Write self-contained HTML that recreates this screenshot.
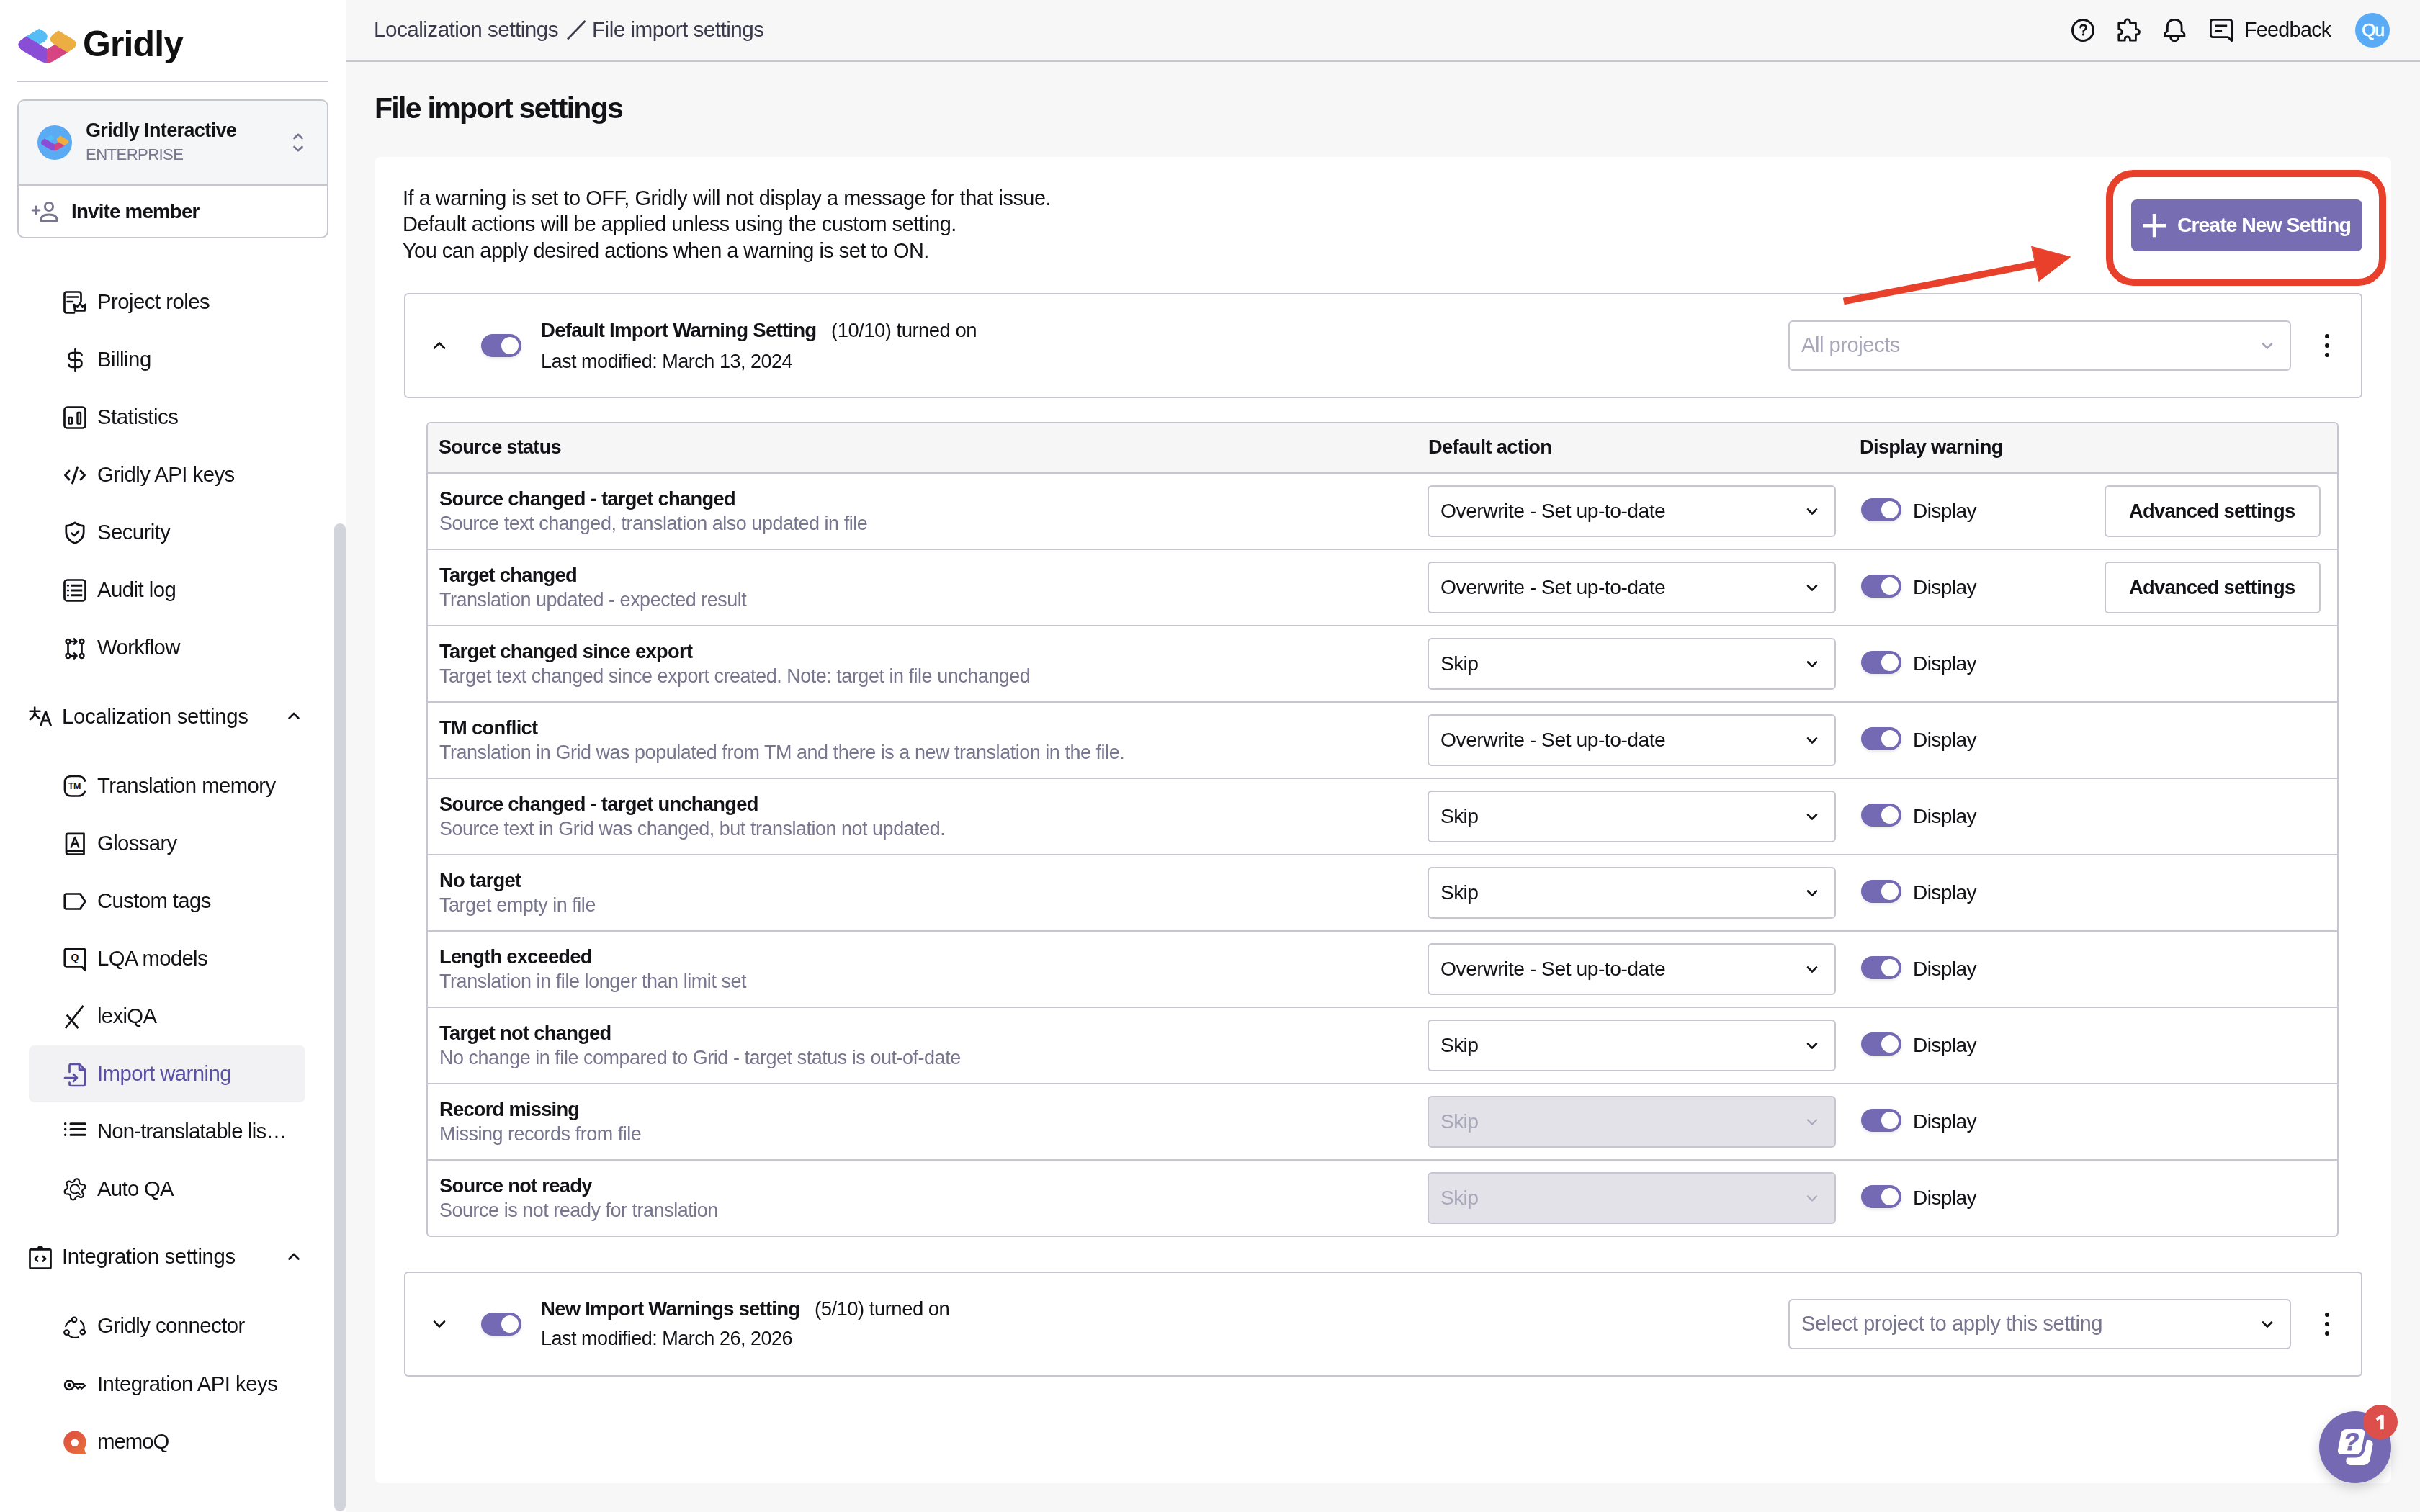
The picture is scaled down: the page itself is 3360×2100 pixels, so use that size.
<!DOCTYPE html>
<html><head><meta charset="utf-8"><title>File import settings</title>
<style>
html,body{margin:0;padding:0;}
body{width:3360px;height:2100px;position:relative;overflow:hidden;background:#f7f7f7;font-family:"Liberation Sans", sans-serif;}
.t{position:absolute;white-space:nowrap;font-family:"Liberation Sans", sans-serif;will-change:transform;}
.b{position:absolute;}
svg.b{overflow:visible;}
@media (max-width:1700px){html{zoom:0.5;}}
</style></head><body>
<div class="b" style="left:0px;top:0px;width:480px;height:2100px;background:#fff"></div>
<svg class="b" style="left:20px;top:30px;color:#000" width="100" height="70" viewBox="20 30 100 70" fill="none" stroke="currentColor" stroke-linecap="round" stroke-linejoin="round">
<path fill="#56bcf6" stroke="#56bcf6" stroke-width="1" d="M36.7 50.8 L54.5 40.2 L61 44 Q67 48 64.5 54 Q63 57 59 59 L54 61.2 Z"/>
<path fill="#8a4dd6" stroke="#8a4dd6" stroke-width="1" d="M36.4 51 L65.6 68.4 L65.6 87 Q61 87 55 84 L30 69 Q25.5 66 25.8 61.5 Q26 58 30 55.5 Z"/>
<path fill="#d64482" stroke="#d64482" stroke-width="1" d="M65.6 68.4 L77.4 61.7 L93.8 72.4 L74 84.5 Q70 87 65.6 87 Z"/>
<path fill="#ecae42" stroke="#ecae42" stroke-width="1" d="M81.3 43 L102 55.5 Q105.5 58 105.2 61.5 Q105 65 101 67.5 L93.8 72.4 L73.5 60 Q70 57.5 70.2 54 Q70.5 50.5 74 48 Z"/>
</svg>
<div class="t" style="left:114.8px;top:35.6px;font-size:50px;line-height:50px;font-weight:700;color:#111;letter-spacing:-0.9px;">Gridly</div>
<div class="b" style="left:24px;top:111.5px;width:432px;height:2.0px;background:#c6c6d1"></div>
<div class="b" style="left:24px;top:138px;width:432px;height:193px;border:2px solid #c6c6d1;border-radius:10px;background:#fff;box-sizing:border-box;overflow:hidden"></div>
<div class="b" style="left:26px;top:140px;width:428px;height:116px;background:#f5f6f8;border-radius:8px 8px 0 0"></div>
<div class="b" style="left:26px;top:256px;width:428px;height:2px;background:#c6c6d1"></div>
<div class="b" style="left:52px;top:174px;width:48px;height:48px;border-radius:50%;background:#5aaaf4"></div>
<svg class="b" style="left:52px;top:174px;" width="48" height="48" viewBox="52 174 48 48" fill="none" stroke="currentColor" stroke-linecap="round" stroke-linejoin="round">
<path fill="#56bcf6" stroke="none" d="M62.5 192.5 L70.5 187.8 L74 189.8 Q76 191.5 74.5 193.5 L70 196.2 Z"/>
<path fill="#8a4dd6" stroke="none" d="M62 192.5 L76 200.5 L76 209.3 Q73 209.5 70.5 208 L58.5 201 Q56.5 199.5 57 197.5 Q57.5 196 59 195 Z"/>
<path fill="#d64482" stroke="none" d="M76 200.5 L81.5 197.3 L89.5 202.3 L80 208 Q78 209.3 76 209.3 Z"/>
<path fill="#ecae42" stroke="none" d="M83.5 188.3 L94 194.5 Q95.5 195.8 95.2 197.3 Q95 198.8 93 199.8 L89.5 202.3 L80 196.5 Q78.5 195.3 78.5 193.7 Q78.7 192.2 80.3 191.2 Z"/>
</svg>
<div class="t" style="left:119px;top:168.1px;font-size:26.98px;line-height:26.98px;font-weight:700;color:#121217;letter-spacing:-0.618px;">Gridly Interactive</div>
<div class="t" style="left:119px;top:204.3px;font-size:22.15px;line-height:22.15px;font-weight:400;color:#78768e;letter-spacing:-0.605px;">ENTERPRISE</div>
<svg class="b" style="left:402px;top:183px;color:#78768e" width="24" height="30" viewBox="0 0 24 30" fill="none" stroke="currentColor" stroke-linecap="round" stroke-linejoin="round"><path stroke-width="2.6" d="M6.5 9 L12 3.8 L17.5 9 M6.5 21 L12 26.2 L17.5 21"/></svg>
<svg class="b" style="left:42px;top:278px;color:#78768e" width="40" height="32" viewBox="0 0 40 32" fill="none" stroke="currentColor" stroke-linecap="round" stroke-linejoin="round"><path stroke-width="2.8" d="M3 14 H13 M8 9 V19"/><circle stroke-width="2.8" cx="26" cy="9" r="5.6"/><path stroke-width="2.8" d="M15 29 V27.5 Q15 20 26 20 Q37 20 37 27.5 V29 Z"/></svg>
<div class="t" style="left:99px;top:279.5px;font-size:27.62px;line-height:27.62px;font-weight:700;color:#121217;letter-spacing:-0.743px;">Invite member</div>
<svg class="b" style="left:88px;top:403.8px;color:#121217" width="32" height="32" viewBox="0 0 32 32" fill="none" stroke="currentColor" stroke-linecap="round" stroke-linejoin="round"><path stroke-width="2.7" d="M15 30.5 H4.5 Q1.5 30.5 1.5 27.5 V4.5 Q1.5 1.5 4.5 1.5 H21.5 Q24.5 1.5 24.5 4.5 V14.5"/><path stroke-width="2.7" d="M5.5 8.5 H20.5 M5.5 15 H13"/><path stroke-width="2.7" d="M16 27.5 L15 19 L19.5 22.5 L23 17.2 L26.5 22.5 L30.5 19 L29.5 27.5 Z"/></svg>
<div class="t" style="left:134.7px;top:403.9px;font-size:29.33px;line-height:29.33px;font-weight:400;color:#121217;letter-spacing:-0.522px;">Project roles</div>
<svg class="b" style="left:88px;top:483.9px;color:#121217" width="32" height="32" viewBox="0 0 32 32" fill="none" stroke="currentColor" stroke-linecap="round" stroke-linejoin="round"><path stroke-width="2.7" d="M16.5 1 V31 M25.5 9.5 Q25.5 6 20.5 6 H12.5 Q7.5 6 7.5 10.8 Q7.5 15.8 12.5 15.8 H20.5 Q25.5 15.8 25.5 20.8 Q25.5 25.8 20.5 25.8 H12.5 Q7.5 25.8 7.5 22"/></svg>
<div class="t" style="left:134.7px;top:484.0px;font-size:29.33px;line-height:29.33px;font-weight:400;color:#121217;letter-spacing:-0.502px;">Billing</div>
<svg class="b" style="left:88px;top:563.8px;color:#121217" width="32" height="32" viewBox="0 0 32 32" fill="none" stroke="currentColor" stroke-linecap="round" stroke-linejoin="round"><rect stroke-width="2.7" x="1.5" y="1.5" width="29" height="29" rx="4"/><rect stroke-width="2.4" x="7.5" y="16" width="4.5" height="8.5" rx="0.5"/><rect stroke-width="2.4" x="19.5" y="9" width="4.5" height="15.5" rx="0.5"/></svg>
<div class="t" style="left:134.7px;top:563.9px;font-size:29.33px;line-height:29.33px;font-weight:400;color:#121217;letter-spacing:-0.501px;">Statistics</div>
<svg class="b" style="left:88px;top:643.8px;color:#121217" width="32" height="32" viewBox="0 0 32 32" fill="none" stroke="currentColor" stroke-linecap="round" stroke-linejoin="round"><path stroke-width="3" d="M8 10 L2.5 16 L8 22 M24 10 L29.5 16 L24 22 M19.5 5 L12.5 27"/></svg>
<div class="t" style="left:134.7px;top:643.9px;font-size:29.33px;line-height:29.33px;font-weight:400;color:#121217;letter-spacing:-0.546px;">Gridly API keys</div>
<svg class="b" style="left:88px;top:723.8px;color:#121217" width="32" height="32" viewBox="0 0 32 32" fill="none" stroke="currentColor" stroke-linecap="round" stroke-linejoin="round"><path stroke-width="2.7" d="M16 1.8 Q10.5 5.8 3.8 6.3 V15 Q3.8 25.5 16 30.5 Q28.2 25.5 28.2 15 V6.3 Q21.5 5.8 16 1.8 Z"/><path stroke-width="2.7" d="M11.6 16.8 L15.2 20 L21.2 13.8"/></svg>
<div class="t" style="left:134.7px;top:723.9px;font-size:29.33px;line-height:29.33px;font-weight:400;color:#121217;letter-spacing:-0.582px;">Security</div>
<svg class="b" style="left:88px;top:803.8px;color:#121217" width="32" height="32" viewBox="0 0 32 32" fill="none" stroke="currentColor" stroke-linecap="round" stroke-linejoin="round"><rect stroke-width="2.7" x="1.5" y="1.5" width="29" height="29" rx="4"/><path stroke-width="3.1" stroke-linecap="butt" d="M10.2 9.2 H26.2 M10.2 16 H26.2 M10.2 22.8 H26.2"/><path stroke-width="3.2" d="M6.4 9.2 h0.1 M6.4 16 h0.1 M6.4 22.8 h0.1"/></svg>
<div class="t" style="left:134.7px;top:803.9px;font-size:29.33px;line-height:29.33px;font-weight:400;color:#121217;letter-spacing:-0.549px;">Audit log</div>
<svg class="b" style="left:88px;top:883.8px;color:#121217" width="32" height="32" viewBox="0 0 32 32" fill="none" stroke="currentColor" stroke-linecap="round" stroke-linejoin="round"><circle stroke-width="2.4" cx="6.5" cy="7" r="3"/><circle stroke-width="2.4" cx="25.5" cy="7" r="3"/><circle stroke-width="2.4" cx="6.5" cy="27" r="3"/><circle stroke-width="2.4" cx="25.5" cy="27" r="3"/><path stroke-width="2.6" d="M6.5 10 V24 M25.5 10 V24 M9.5 7 H18.5 M15 3.5 L18.5 7 L15 10.5 M9.5 27 H18.5 M15 23.5 L18.5 27 L15 30.5"/></svg>
<div class="t" style="left:134.7px;top:883.9px;font-size:29.33px;line-height:29.33px;font-weight:400;color:#121217;letter-spacing:-0.66px;">Workflow</div>
<svg class="b" style="left:40px;top:979.8px;color:#121217" width="32" height="32" viewBox="0 0 32 32" fill="none" stroke="currentColor" stroke-linecap="round" stroke-linejoin="round"><path stroke-width="2.6" d="M1.5 7.8 H15.5 M8.2 2.5 V8.5 Q8 15.5 1.8 19.2 M8.8 10.5 Q10.5 15.5 15 17.8"/><path stroke-width="2.8" d="M16.5 27.5 L23.5 8.5 L30.5 27.5 M19 21 H28"/></svg>
<div class="t" style="left:86px;top:979.9px;font-size:29.33px;line-height:29.33px;font-weight:400;color:#121217;letter-spacing:-0.258px;">Localization settings</div>
<svg class="b" style="left:396px;top:982px;color:#121217" width="24" height="24" viewBox="0 0 24 24" fill="none" stroke="currentColor" stroke-linecap="round" stroke-linejoin="round"><path stroke-width="2.6" d="M5.5 15.5 L12 9 L18.5 15.5"/></svg>
<div class="b" style="left:40px;top:1452px;width:384px;height:79px;background:#f2f2f5;border-radius:8px"></div>
<svg class="b" style="left:88px;top:1076.2px;color:#121217" width="32" height="32" viewBox="0 0 32 32" fill="none" stroke="currentColor" stroke-linecap="round" stroke-linejoin="round"><path stroke-width="2.7" d="M30 8.5 Q27.5 2 20.5 2 H11 Q2 2 2 11 V20.5 Q2 29.5 11 29.5 H20.5 Q27.5 29.5 30 23"/><text x="15.5" y="20.2" fill="currentColor" stroke="none" font-family="Liberation Sans" font-weight="700" font-size="12.5" stroke="currentColor" stroke-width="0.5" text-anchor="middle" letter-spacing="-0.3">TM</text></svg>
<div class="t" style="left:134.7px;top:1076.3px;font-size:29.33px;line-height:29.33px;font-weight:400;color:#121217;letter-spacing:-0.584px;">Translation memory</div>
<svg class="b" style="left:88px;top:1155.8px;color:#121217" width="32" height="32" viewBox="0 0 32 32" fill="none" stroke="currentColor" stroke-linecap="round" stroke-linejoin="round"><path stroke-width="2.7" d="M28.5 26.5 V1.8 H6.5 Q4 1.8 4 4.3 V28 Q4 30.5 6.5 30.5 H28.5 V26 H5"/><path stroke-width="2.5" d="M10.8 20.5 L16 7 L21.2 20.5 M12.6 16 H19.4"/></svg>
<div class="t" style="left:134.7px;top:1155.9px;font-size:29.33px;line-height:29.33px;font-weight:400;color:#121217;letter-spacing:-0.636px;">Glossary</div>
<svg class="b" style="left:88px;top:1235.8px;color:#121217" width="32" height="32" viewBox="0 0 32 32" fill="none" stroke="currentColor" stroke-linecap="round" stroke-linejoin="round"><path stroke-width="2.7" d="M1.8 8 Q1.8 5.5 4.3 5.5 H23.2 L30.3 16 L23.2 26.5 H4.3 Q1.8 26.5 1.8 24 Z"/></svg>
<div class="t" style="left:134.7px;top:1235.9px;font-size:29.33px;line-height:29.33px;font-weight:400;color:#121217;letter-spacing:-0.633px;">Custom tags</div>
<svg class="b" style="left:88px;top:1315.8px;color:#121217" width="32" height="32" viewBox="0 0 32 32" fill="none" stroke="currentColor" stroke-linecap="round" stroke-linejoin="round"><path stroke-width="2.7" d="M30.3 31.8 V4.3 Q30.3 1.8 27.8 1.8 H4.3 Q1.8 1.8 1.8 4.3 V23.8 Q1.8 26.3 4.3 26.3 H25 Z"/><text x="16" y="18.5" fill="currentColor" stroke="none" font-family="Liberation Sans" font-weight="700" font-size="14" stroke="currentColor" stroke-width="0.6" text-anchor="middle">Q</text></svg>
<div class="t" style="left:134.7px;top:1315.9px;font-size:29.33px;line-height:29.33px;font-weight:400;color:#121217;letter-spacing:-0.683px;">LQA models</div>
<svg class="b" style="left:88px;top:1395.8px;color:#121217" width="32" height="32" viewBox="0 0 32 32" fill="none" stroke="currentColor" stroke-linecap="round" stroke-linejoin="round"><path stroke-width="2.8" stroke-linecap="butt" d="M27.5 0.8 L3 32 M4.8 13.5 L20.5 32"/></svg>
<div class="t" style="left:134.7px;top:1395.9px;font-size:29.33px;line-height:29.33px;font-weight:400;color:#121217;letter-spacing:-0.664px;">lexiQA</div>
<svg class="b" style="left:88px;top:1475.8px;color:#5a4fa5" width="32" height="32" viewBox="0 0 32 32" fill="none" stroke="currentColor" stroke-linecap="round" stroke-linejoin="round"><path stroke-width="2.7" d="M8.5 13 V4 Q8.5 1.8 10.7 1.8 H22 L29.8 9.6 V29.8 Q29.8 32 27.6 32 H10.7 Q8.5 32 8.5 29.8 V27.5 M22 1.8 V9.6 H29.8"/><path stroke-width="2.7" d="M2 21 H19 M14 16 L19 21 L14 26"/></svg>
<div class="t" style="left:134.7px;top:1475.9px;font-size:29.33px;line-height:29.33px;font-weight:400;color:#5a4fa5;letter-spacing:-0.574px;">Import warning</div>
<svg class="b" style="left:88px;top:1555.8px;color:#121217" width="32" height="32" viewBox="0 0 32 32" fill="none" stroke="currentColor" stroke-linecap="round" stroke-linejoin="round"><path stroke-width="3" d="M10 4.8 H30.5 M10 12.5 H30.5 M10 20.3 H30.5"/><path stroke-width="3.4" d="M2.6 4.8 h0.1 M2.6 12.5 h0.1 M2.6 20.3 h0.1"/></svg>
<div class="t" style="left:134.7px;top:1555.9px;font-size:29.33px;line-height:29.33px;font-weight:400;color:#121217;letter-spacing:-0.839px;">Non-translatable lis&hellip;</div>
<svg class="b" style="left:88px;top:1635.8px;color:#121217" width="32" height="32" viewBox="0 0 32 32" fill="none" stroke="currentColor" stroke-linecap="round" stroke-linejoin="round"><path stroke-width="2.2" d="M27.74 15.80 L27.13 16.38 L26.70 16.92 L26.39 17.45 L26.18 17.96 L26.07 18.50 L26.06 19.07 L26.15 19.70 L26.34 20.40 L26.72 21.26 L27.65 22.53 L27.78 23.45 L27.68 24.29 L27.41 25.04 L26.99 25.70 L26.44 26.24 L25.78 26.66 L25.02 26.94 L24.16 27.03 L23.17 26.84 L21.87 25.97 L21.06 25.73 L20.38 25.63 L19.77 25.62 L19.22 25.70 L18.70 25.87 L18.20 26.15 L17.70 26.54 L17.18 27.06 L16.63 27.82 L16.00 29.26 L15.26 29.83 L14.49 30.16 L13.70 30.30 L12.92 30.27 L12.18 30.07 L11.48 29.70 L10.87 29.18 L10.35 28.48 L10.02 27.53 L10.13 25.97 L9.93 25.15 L9.68 24.50 L9.38 23.97 L9.04 23.53 L8.63 23.17 L8.14 22.88 L7.55 22.64 L6.84 22.45 L5.91 22.35 L4.35 22.53 L3.48 22.18 L2.81 21.67 L2.29 21.06 L1.93 20.37 L1.73 19.62 L1.70 18.84 L1.85 18.04 L2.19 17.25 L2.85 16.49 L4.26 15.80 L4.87 15.22 L5.30 14.68 L5.61 14.15 L5.82 13.64 L5.93 13.10 L5.94 12.53 L5.85 11.90 L5.66 11.20 L5.28 10.34 L4.35 9.07 L4.22 8.15 L4.32 7.31 L4.59 6.56 L5.01 5.90 L5.56 5.36 L6.22 4.94 L6.98 4.66 L7.84 4.57 L8.83 4.76 L10.13 5.63 L10.94 5.87 L11.62 5.97 L12.23 5.98 L12.78 5.90 L13.30 5.73 L13.80 5.45 L14.30 5.06 L14.82 4.54 L15.37 3.78 L16.00 2.34 L16.74 1.77 L17.51 1.44 L18.30 1.30 L19.08 1.33 L19.82 1.53 L20.52 1.90 L21.13 2.42 L21.65 3.12 L21.98 4.07 L21.87 5.63 L22.07 6.45 L22.32 7.10 L22.62 7.63 L22.96 8.07 L23.37 8.43 L23.86 8.72 L24.45 8.96 L25.16 9.15 L26.09 9.25 L27.65 9.07 L28.52 9.42 L29.19 9.93 L29.71 10.54 L30.07 11.23 L30.27 11.98 L30.30 12.76 L30.15 13.56 L29.81 14.35 L29.15 15.11 L27.74 15.80 Z"/><path stroke-width="2.1" d="M22.1 15.4 A6.2 6.2 0 1 0 19.9 20.1"/><path stroke-width="2.1" d="M19.9 19.8 L22.9 23.1"/></svg>
<div class="t" style="left:134.7px;top:1635.9px;font-size:29.33px;line-height:29.33px;font-weight:400;color:#121217;letter-spacing:-0.711px;">Auto QA</div>
<svg class="b" style="left:40px;top:1730.3px;color:#121217" width="32" height="32" viewBox="0 0 32 32" fill="none" stroke="currentColor" stroke-linecap="round" stroke-linejoin="round"><rect stroke-width="2.7" x="1.5" y="5.3" width="29" height="26.2" rx="1.5"/><path stroke-width="2.6" d="M13 5 Q13 1.6 16 1.6 Q19 1.6 19 5 M12.2 15 L8.8 18.3 L12.2 21.6 M19.8 15 L23.2 18.3 L19.8 21.6"/></svg>
<div class="t" style="left:86px;top:1730.4px;font-size:29.33px;line-height:29.33px;font-weight:400;color:#121217;letter-spacing:-0.352px;">Integration settings</div>
<svg class="b" style="left:396px;top:1732.5px;color:#121217" width="24" height="24" viewBox="0 0 24 24" fill="none" stroke="currentColor" stroke-linecap="round" stroke-linejoin="round"><path stroke-width="2.6" d="M5.5 15.5 L12 9 L18.5 15.5"/></svg>
<svg class="b" style="left:88px;top:1826.1px;color:#121217" width="32" height="32" viewBox="0 0 32 32" fill="none" stroke="currentColor" stroke-linecap="round" stroke-linejoin="round"><circle stroke-width="2.2" cx="15.05" cy="6.9" r="3.3"/><circle stroke-width="2.2" cx="4.5" cy="24.6" r="3.3"/><circle stroke-width="2.2" cx="26.8" cy="24.1" r="3.3"/><path stroke-width="2.2" d="M11.9 7.6 A13.3 13.3 0 0 0 3.1 16.2 M24.0 8.9 A13.3 13.3 0 0 1 28.5 20.9 M7.0 27.9 A13.3 13.3 0 0 0 20.6 31.2"/></svg>
<div class="t" style="left:134.7px;top:1826.2px;font-size:29.33px;line-height:29.33px;font-weight:400;color:#121217;letter-spacing:-0.547px;">Gridly connector</div>
<svg class="b" style="left:88px;top:1907.1px;color:#121217" width="32" height="32" viewBox="0 0 32 32" fill="none" stroke="currentColor" stroke-linecap="round" stroke-linejoin="round"><circle stroke-width="2.5" cx="8.2" cy="16.7" r="6.2"/><circle cx="8.2" cy="16.7" r="2.6" fill="currentColor" stroke="none"/><path stroke-width="2.4" stroke-linejoin="miter" d="M14.4 15.2 H27.2 L30 17.3 L25.5 21.5 L22.8 19.2 L20.1 21.4 L17.3 18.6 H14.4"/></svg>
<div class="t" style="left:134.7px;top:1907.2px;font-size:29.33px;line-height:29.33px;font-weight:400;color:#121217;letter-spacing:-0.528px;">Integration API keys</div>
<svg class="b" style="left:88px;top:1987.3px;" width="32" height="32" viewBox="0 0 32 32" fill="none" stroke="currentColor" stroke-linecap="round" stroke-linejoin="round"><defs><linearGradient id="mq" x1="0" y1="0" x2="1" y2="1"><stop offset="0" stop-color="#e0503f"/><stop offset="0.5" stop-color="#e25c3e"/><stop offset="1" stop-color="#e8733a"/></linearGradient></defs><path fill="url(#mq)" stroke="none" d="M16 0.5 A15.8 15.8 0 0 1 29 25.2 L31.2 32 H16 A15.75 15.75 0 0 1 16 0.5 Z"/><circle cx="15.8" cy="16.7" r="5.2" fill="#fff" stroke="none"/></svg>
<div class="t" style="left:134.7px;top:1987.4px;font-size:29.33px;line-height:29.33px;font-weight:400;color:#121217;letter-spacing:-1.003px;">memoQ</div>
<div class="b" style="left:464px;top:727px;width:16px;height:1372px;background:#d2d4dc;border-radius:8px"></div>
<div class="b" style="left:480px;top:84px;width:2880px;height:2px;background:#c6c6d1"></div>
<div class="t" style="left:519.3px;top:25.9px;font-size:29.64px;line-height:29.64px;font-weight:400;color:#3b3a4c;letter-spacing:-0.513px;">Localization settings</div>
<svg class="b" style="left:784px;top:26px;color:#3b3a4c" width="32" height="32" viewBox="0 0 32 32" fill="none" stroke="currentColor" stroke-linecap="round" stroke-linejoin="round"><path stroke-width="2.6" stroke-linecap="butt" d="M4 28.5 L28.5 3"/></svg>
<div class="t" style="left:822px;top:25.9px;font-size:29.64px;line-height:29.64px;font-weight:400;color:#3b3a4c;letter-spacing:-0.503px;">File import settings</div>
<svg class="b" style="left:2874px;top:24px;color:#121217" width="36" height="36" viewBox="0 0 36 36" fill="none" stroke="currentColor" stroke-linecap="round" stroke-linejoin="round"><circle stroke-width="3" cx="18" cy="18" r="14.5"/><path stroke-width="2.6" d="M14.6 14.2 Q14.6 10.9 18.5 10.9 Q22.4 10.9 22.4 14.1 Q22.4 16.4 20.1 17.6 Q18.5 18.5 18.5 20.4"/><circle cx="18.5" cy="23.9" r="1.7" fill="currentColor" stroke="none"/></svg>
<svg class="b" style="left:2938px;top:24px;color:#121217" width="36" height="36" viewBox="0 0 36 36" fill="none" stroke="currentColor" stroke-linecap="round" stroke-linejoin="round"><path stroke-width="2.8" d="M3.8 7.8 H12.2 V6.5 A3.6 3.6 0 0 1 19.4 6.5 V7.8 H27.4 V16.6 H28.8 A3.7 3.7 0 0 1 28.8 24 H27.4 V32.2 H19.4 V30.6 A3.6 3.6 0 0 0 12.2 30.6 V32.2 H3.8 V24 H4.5 A3.7 3.7 0 0 0 4.5 16.6 H3.8 Z"/></svg>
<svg class="b" style="left:3002px;top:24px;color:#121217" width="36" height="36" viewBox="0 0 36 36" fill="none" stroke="currentColor" stroke-linecap="round" stroke-linejoin="round"><path stroke-width="2.8" d="M3.5 26.3 V23.8 Q3.5 21.2 7.3 19.8 V13.8 Q7.3 3.4 17.2 3.4 Q27.1 3.4 27.1 13.8 V19.8 Q30.9 21.2 30.9 23.8 V26.3 Z"/><path stroke-width="2.8" d="M11.5 27.2 A5.7 5.7 0 0 0 22.9 27.2"/></svg>
<svg class="b" style="left:3066px;top:24px;color:#121217" width="36" height="36" viewBox="0 0 36 36" fill="none" stroke="currentColor" stroke-linecap="round" stroke-linejoin="round"><path stroke-width="2.8" stroke-linejoin="round" d="M6.5 3.4 H29.5 Q32.6 3.4 32.6 6.5 V32.8 L27.6 27.7 H6.5 Q3.4 27.7 3.4 24.6 V6.5 Q3.4 3.4 6.5 3.4 Z"/><path stroke-width="3.3" stroke-linecap="butt" d="M9.1 12.2 H26.2 M9.1 18.7 H19.1"/></svg>
<div class="t" style="left:3115.8px;top:27.0px;font-size:28.7px;line-height:28.7px;font-weight:400;color:#121217;letter-spacing:-0.693px;">Feedback</div>
<div class="b" style="left:3270px;top:18px;width:48px;height:48px;border-radius:50%;background:#5aabf5;color:#fff;font-size:24.5px;line-height:48px;text-align:center;font-weight:400;letter-spacing:-1.2px;padding-left:1px;box-sizing:border-box;-webkit-text-stroke:0.7px #fff">Qu</div>
<div class="t" style="left:519.8px;top:130.4px;font-size:41px;line-height:41px;font-weight:700;color:#121217;letter-spacing:-1.7px;">File import settings</div>
<div class="b" style="left:520px;top:218px;width:2800px;height:1842px;background:#fff;border-radius:8px"></div>
<div class="t" style="left:558.6px;top:260.9px;font-size:28.91px;line-height:28.91px;font-weight:400;color:#121217;letter-spacing:-0.474px;">If a warning is set to OFF, Gridly will not display a message for that issue.</div>
<div class="t" style="left:558.6px;top:296.9px;font-size:28.91px;line-height:28.91px;font-weight:400;color:#121217;letter-spacing:-0.489px;">Default actions will be applied unless using the custom setting.</div>
<div class="t" style="left:558.6px;top:333.9px;font-size:28.91px;line-height:28.91px;font-weight:400;color:#121217;letter-spacing:-0.513px;">You can apply desired actions when a warning is set to ON.</div>
<div class="b" style="left:2959px;top:277px;width:321px;height:72px;border-radius:8px;background:#776db2"></div>
<svg class="b" style="left:2975px;top:296.7px;color:#fff" width="32" height="33" viewBox="0 0 32 33" fill="none" stroke="currentColor" stroke-linecap="round" stroke-linejoin="round"><path stroke-width="4.4" stroke-linecap="butt" d="M16 0 V32.3 M0 16.2 H32"/></svg>
<div class="t" style="left:3022.5px;top:297.6px;font-size:28.5px;line-height:28.5px;font-weight:700;color:#fff;letter-spacing:-1.05px;">Create New Setting</div>
<div class="b" style="left:560.5px;top:407px;width:2719.0px;height:146px;border:2px solid #c6c6d1;border-radius:6px;box-sizing:border-box"></div>
<svg class="b" style="left:598px;top:468.0px;color:#121217" width="24" height="24" viewBox="0 0 24 24" fill="none" stroke="currentColor" stroke-linecap="round" stroke-linejoin="round"><path stroke-width="2.6" d="M5 15.5 L12 8.5 L19 15.5"/></svg>
<div class="b" style="left:668px;top:464.0px;width:56px;height:32px;border-radius:16px;background:#7469b3;box-shadow:0 2px 4px rgba(0,0,0,0.10)"></div>
<div class="b" style="left:696px;top:468.0px;width:24px;height:24px;border-radius:50%;background:#fff"></div>
<div class="t" style="left:750.8px;top:444.8px;font-size:27.62px;line-height:27.62px;font-weight:700;color:#121217;letter-spacing:-0.766px;">Default Import Warning Setting</div>
<div class="t" style="left:1154px;top:444.9px;font-size:27.46px;line-height:27.46px;font-weight:400;color:#121217;letter-spacing:-0.506px;">(10/10) turned on</div>
<div class="t" style="left:750.8px;top:488.7px;font-size:27.04px;line-height:27.04px;font-weight:400;color:#121217;letter-spacing:-0.5px;">Last modified: March 13, 2024</div>
<div class="b" style="left:2482.6px;top:445.0px;width:698.8000000000002px;height:70.0px;border:2px solid #c6c6d1;border-radius:6px;box-sizing:border-box;background:#fff"></div>
<div class="t" style="left:2500.8px;top:464.9px;font-size:29.22px;line-height:29.22px;font-weight:400;color:#a8a7ba;letter-spacing:-0.5px;">All projects</div>
<svg class="b" style="left:3136px;top:468.0px;color:#a8a7ba" width="24" height="24" viewBox="0 0 24 24" fill="none" stroke="currentColor" stroke-linecap="round" stroke-linejoin="round"><path stroke-width="2.6" d="M6 9.5 L12 15.5 L18 9.5"/></svg>
<div class="b" style="left:3227.6px;top:463.6px;width:6.8px;height:6.8px;border-radius:50%;background:#111"></div>
<div class="b" style="left:3227.6px;top:476.6px;width:6.8px;height:6.8px;border-radius:50%;background:#111"></div>
<div class="b" style="left:3227.6px;top:489.6px;width:6.8px;height:6.8px;border-radius:50%;background:#111"></div>
<div class="b" style="left:560.5px;top:1766px;width:2719.0px;height:146px;border:2px solid #c6c6d1;border-radius:6px;box-sizing:border-box"></div>
<svg class="b" style="left:598px;top:1827.0px;color:#121217" width="24" height="24" viewBox="0 0 24 24" fill="none" stroke="currentColor" stroke-linecap="round" stroke-linejoin="round"><path stroke-width="2.6" d="M5 8.5 L12 15.5 L19 8.5"/></svg>
<div class="b" style="left:668px;top:1823.0px;width:56px;height:32px;border-radius:16px;background:#7469b3;box-shadow:0 2px 4px rgba(0,0,0,0.10)"></div>
<div class="b" style="left:696px;top:1827.0px;width:24px;height:24px;border-radius:50%;background:#fff"></div>
<div class="t" style="left:750.8px;top:1804.1px;font-size:27.62px;line-height:27.62px;font-weight:700;color:#121217;letter-spacing:-0.798px;">New Import Warnings setting</div>
<div class="t" style="left:1131.3px;top:1804.2px;font-size:27.46px;line-height:27.46px;font-weight:400;color:#121217;letter-spacing:-0.501px;">(5/10) turned on</div>
<div class="t" style="left:750.8px;top:1846.4px;font-size:27.04px;line-height:27.04px;font-weight:400;color:#121217;letter-spacing:-0.5px;">Last modified: March 26, 2026</div>
<div class="b" style="left:2482.6px;top:1804.0px;width:698.8000000000002px;height:70.0px;border:2px solid #c6c6d1;border-radius:6px;box-sizing:border-box;background:#fff"></div>
<div class="t" style="left:2500.8px;top:1823.9px;font-size:29.22px;line-height:29.22px;font-weight:400;color:#77758f;letter-spacing:-0.478px;">Select project to apply this setting</div>
<svg class="b" style="left:3136px;top:1827.0px;color:#121217" width="24" height="24" viewBox="0 0 24 24" fill="none" stroke="currentColor" stroke-linecap="round" stroke-linejoin="round"><path stroke-width="2.6" d="M6 9.5 L12 15.5 L18 9.5"/></svg>
<div class="b" style="left:3227.6px;top:1822.6px;width:6.8px;height:6.8px;border-radius:50%;background:#111"></div>
<div class="b" style="left:3227.6px;top:1835.6px;width:6.8px;height:6.8px;border-radius:50%;background:#111"></div>
<div class="b" style="left:3227.6px;top:1848.6px;width:6.8px;height:6.8px;border-radius:50%;background:#111"></div>
<div class="b" style="left:592px;top:586px;width:2655px;height:1132px;border:2px solid #c6c6d1;border-radius:6px;box-sizing:border-box;overflow:hidden;background:#fff"></div>
<div class="b" style="left:594px;top:588px;width:2651px;height:68px;background:#f6f6f7;border-radius:4px 4px 0 0"></div>
<div class="b" style="left:594px;top:656px;width:2651px;height:2px;background:#c6c6d1"></div>
<div class="t" style="left:609.3px;top:607.0px;font-size:27.09px;line-height:27.09px;font-weight:700;color:#121217;letter-spacing:-0.711px;">Source status</div>
<div class="t" style="left:1982.6px;top:606.9px;font-size:27.3px;line-height:27.3px;font-weight:700;color:#121217;letter-spacing:-0.661px;">Default action</div>
<div class="t" style="left:2582.3px;top:606.9px;font-size:27.3px;line-height:27.3px;font-weight:700;color:#121217;letter-spacing:-0.712px;">Display warning</div>
<div class="t" style="left:609.6px;top:679.2px;font-size:27.3px;line-height:27.3px;font-weight:700;color:#121217;letter-spacing:-0.686px;">Source changed - target changed</div>
<div class="t" style="left:609.6px;top:713.5px;font-size:26.94px;line-height:26.94px;font-weight:400;color:#78768e;letter-spacing:-0.457px;">Source text changed, translation also updated in file</div>
<div class="b" style="left:1982px;top:674px;width:567px;height:72px;border:2px solid #c6c6d1;border-radius:6px;box-sizing:border-box;background:#fff"></div>
<div class="t" style="left:2000px;top:695.3px;font-size:28.29px;line-height:28.29px;font-weight:400;color:#121217;letter-spacing:-0.501px;">Overwrite - Set up-to-date</div>
<svg class="b" style="left:2504px;top:697.5px;color:#121217" width="24" height="24" viewBox="0 0 24 24" fill="none" stroke="currentColor" stroke-linecap="round" stroke-linejoin="round"><path stroke-width="2.6" d="M6 9.5 L12 15.5 L18 9.5"/></svg>
<div class="b" style="left:2584px;top:692px;width:56px;height:32px;border-radius:16px;background:#7469b3;box-shadow:0 2px 4px rgba(0,0,0,0.10)"></div>
<div class="b" style="left:2612px;top:696px;width:24px;height:24px;border-radius:50%;background:#fff"></div>
<div class="t" style="left:2655.8px;top:695.6px;font-size:28.08px;line-height:28.08px;font-weight:400;color:#121217;letter-spacing:-0.59px;">Display</div>
<div class="b" style="left:2922px;top:674px;width:299.8000000000002px;height:72px;border:2px solid #c6c6d1;border-radius:6px;box-sizing:border-box;background:#fff"></div>
<div class="t" style="left:2956.2px;top:696.2px;font-size:27.3px;line-height:27.3px;font-weight:700;color:#121217;letter-spacing:-0.722px;">Advanced settings</div>
<div class="b" style="left:594px;top:762px;width:2651px;height:2px;background:#c6c6d1"></div>
<div class="t" style="left:609.6px;top:785.2px;font-size:27.3px;line-height:27.3px;font-weight:700;color:#121217;letter-spacing:-0.737px;">Target changed</div>
<div class="t" style="left:609.6px;top:819.5px;font-size:26.94px;line-height:26.94px;font-weight:400;color:#78768e;letter-spacing:-0.474px;">Translation updated - expected result</div>
<div class="b" style="left:1982px;top:780px;width:567px;height:72px;border:2px solid #c6c6d1;border-radius:6px;box-sizing:border-box;background:#fff"></div>
<div class="t" style="left:2000px;top:801.3px;font-size:28.29px;line-height:28.29px;font-weight:400;color:#121217;letter-spacing:-0.501px;">Overwrite - Set up-to-date</div>
<svg class="b" style="left:2504px;top:803.5px;color:#121217" width="24" height="24" viewBox="0 0 24 24" fill="none" stroke="currentColor" stroke-linecap="round" stroke-linejoin="round"><path stroke-width="2.6" d="M6 9.5 L12 15.5 L18 9.5"/></svg>
<div class="b" style="left:2584px;top:798px;width:56px;height:32px;border-radius:16px;background:#7469b3;box-shadow:0 2px 4px rgba(0,0,0,0.10)"></div>
<div class="b" style="left:2612px;top:802px;width:24px;height:24px;border-radius:50%;background:#fff"></div>
<div class="t" style="left:2655.8px;top:801.6px;font-size:28.08px;line-height:28.08px;font-weight:400;color:#121217;letter-spacing:-0.59px;">Display</div>
<div class="b" style="left:2922px;top:780px;width:299.8000000000002px;height:72px;border:2px solid #c6c6d1;border-radius:6px;box-sizing:border-box;background:#fff"></div>
<div class="t" style="left:2956.2px;top:802.2px;font-size:27.3px;line-height:27.3px;font-weight:700;color:#121217;letter-spacing:-0.722px;">Advanced settings</div>
<div class="b" style="left:594px;top:868px;width:2651px;height:2px;background:#c6c6d1"></div>
<div class="t" style="left:609.6px;top:891.2px;font-size:27.3px;line-height:27.3px;font-weight:700;color:#121217;letter-spacing:-0.677px;">Target changed since export</div>
<div class="t" style="left:609.6px;top:925.5px;font-size:26.94px;line-height:26.94px;font-weight:400;color:#78768e;letter-spacing:-0.462px;">Target text changed since export created. Note: target in file unchanged</div>
<div class="b" style="left:1982px;top:886px;width:567px;height:72px;border:2px solid #c6c6d1;border-radius:6px;box-sizing:border-box;background:#fff"></div>
<div class="t" style="left:2000px;top:907.3px;font-size:28.29px;line-height:28.29px;font-weight:400;color:#121217;letter-spacing:-0.705px;">Skip</div>
<svg class="b" style="left:2504px;top:909.5px;color:#121217" width="24" height="24" viewBox="0 0 24 24" fill="none" stroke="currentColor" stroke-linecap="round" stroke-linejoin="round"><path stroke-width="2.6" d="M6 9.5 L12 15.5 L18 9.5"/></svg>
<div class="b" style="left:2584px;top:904px;width:56px;height:32px;border-radius:16px;background:#7469b3;box-shadow:0 2px 4px rgba(0,0,0,0.10)"></div>
<div class="b" style="left:2612px;top:908px;width:24px;height:24px;border-radius:50%;background:#fff"></div>
<div class="t" style="left:2655.8px;top:907.6px;font-size:28.08px;line-height:28.08px;font-weight:400;color:#121217;letter-spacing:-0.59px;">Display</div>
<div class="b" style="left:594px;top:974px;width:2651px;height:2px;background:#c6c6d1"></div>
<div class="t" style="left:609.6px;top:997.2px;font-size:27.3px;line-height:27.3px;font-weight:700;color:#121217;letter-spacing:-0.686px;">TM conflict</div>
<div class="t" style="left:609.6px;top:1031.5px;font-size:26.94px;line-height:26.94px;font-weight:400;color:#78768e;letter-spacing:-0.453px;">Translation in Grid was populated from TM and there is a new translation in the file.</div>
<div class="b" style="left:1982px;top:992px;width:567px;height:72px;border:2px solid #c6c6d1;border-radius:6px;box-sizing:border-box;background:#fff"></div>
<div class="t" style="left:2000px;top:1013.3px;font-size:28.29px;line-height:28.29px;font-weight:400;color:#121217;letter-spacing:-0.501px;">Overwrite - Set up-to-date</div>
<svg class="b" style="left:2504px;top:1015.5px;color:#121217" width="24" height="24" viewBox="0 0 24 24" fill="none" stroke="currentColor" stroke-linecap="round" stroke-linejoin="round"><path stroke-width="2.6" d="M6 9.5 L12 15.5 L18 9.5"/></svg>
<div class="b" style="left:2584px;top:1010px;width:56px;height:32px;border-radius:16px;background:#7469b3;box-shadow:0 2px 4px rgba(0,0,0,0.10)"></div>
<div class="b" style="left:2612px;top:1014px;width:24px;height:24px;border-radius:50%;background:#fff"></div>
<div class="t" style="left:2655.8px;top:1013.6px;font-size:28.08px;line-height:28.08px;font-weight:400;color:#121217;letter-spacing:-0.59px;">Display</div>
<div class="b" style="left:594px;top:1080px;width:2651px;height:2px;background:#c6c6d1"></div>
<div class="t" style="left:609.6px;top:1103.2px;font-size:27.3px;line-height:27.3px;font-weight:700;color:#121217;letter-spacing:-0.693px;">Source changed - target unchanged</div>
<div class="t" style="left:609.6px;top:1137.5px;font-size:26.94px;line-height:26.94px;font-weight:400;color:#78768e;letter-spacing:-0.468px;">Source text in Grid was changed, but translation not updated.</div>
<div class="b" style="left:1982px;top:1098px;width:567px;height:72px;border:2px solid #c6c6d1;border-radius:6px;box-sizing:border-box;background:#fff"></div>
<div class="t" style="left:2000px;top:1119.3px;font-size:28.29px;line-height:28.29px;font-weight:400;color:#121217;letter-spacing:-0.705px;">Skip</div>
<svg class="b" style="left:2504px;top:1121.5px;color:#121217" width="24" height="24" viewBox="0 0 24 24" fill="none" stroke="currentColor" stroke-linecap="round" stroke-linejoin="round"><path stroke-width="2.6" d="M6 9.5 L12 15.5 L18 9.5"/></svg>
<div class="b" style="left:2584px;top:1116px;width:56px;height:32px;border-radius:16px;background:#7469b3;box-shadow:0 2px 4px rgba(0,0,0,0.10)"></div>
<div class="b" style="left:2612px;top:1120px;width:24px;height:24px;border-radius:50%;background:#fff"></div>
<div class="t" style="left:2655.8px;top:1119.6px;font-size:28.08px;line-height:28.08px;font-weight:400;color:#121217;letter-spacing:-0.59px;">Display</div>
<div class="b" style="left:594px;top:1186px;width:2651px;height:2px;background:#c6c6d1"></div>
<div class="t" style="left:609.6px;top:1209.2px;font-size:27.3px;line-height:27.3px;font-weight:700;color:#121217;letter-spacing:-0.713px;">No target</div>
<div class="t" style="left:609.6px;top:1243.5px;font-size:26.94px;line-height:26.94px;font-weight:400;color:#78768e;letter-spacing:-0.458px;">Target empty in file</div>
<div class="b" style="left:1982px;top:1204px;width:567px;height:72px;border:2px solid #c6c6d1;border-radius:6px;box-sizing:border-box;background:#fff"></div>
<div class="t" style="left:2000px;top:1225.3px;font-size:28.29px;line-height:28.29px;font-weight:400;color:#121217;letter-spacing:-0.705px;">Skip</div>
<svg class="b" style="left:2504px;top:1227.5px;color:#121217" width="24" height="24" viewBox="0 0 24 24" fill="none" stroke="currentColor" stroke-linecap="round" stroke-linejoin="round"><path stroke-width="2.6" d="M6 9.5 L12 15.5 L18 9.5"/></svg>
<div class="b" style="left:2584px;top:1222px;width:56px;height:32px;border-radius:16px;background:#7469b3;box-shadow:0 2px 4px rgba(0,0,0,0.10)"></div>
<div class="b" style="left:2612px;top:1226px;width:24px;height:24px;border-radius:50%;background:#fff"></div>
<div class="t" style="left:2655.8px;top:1225.6px;font-size:28.08px;line-height:28.08px;font-weight:400;color:#121217;letter-spacing:-0.59px;">Display</div>
<div class="b" style="left:594px;top:1292px;width:2651px;height:2px;background:#c6c6d1"></div>
<div class="t" style="left:609.6px;top:1315.2px;font-size:27.3px;line-height:27.3px;font-weight:700;color:#121217;letter-spacing:-0.758px;">Length exceeded</div>
<div class="t" style="left:609.6px;top:1349.5px;font-size:26.94px;line-height:26.94px;font-weight:400;color:#78768e;letter-spacing:-0.427px;">Translation in file longer than limit set</div>
<div class="b" style="left:1982px;top:1310px;width:567px;height:72px;border:2px solid #c6c6d1;border-radius:6px;box-sizing:border-box;background:#fff"></div>
<div class="t" style="left:2000px;top:1331.3px;font-size:28.29px;line-height:28.29px;font-weight:400;color:#121217;letter-spacing:-0.501px;">Overwrite - Set up-to-date</div>
<svg class="b" style="left:2504px;top:1333.5px;color:#121217" width="24" height="24" viewBox="0 0 24 24" fill="none" stroke="currentColor" stroke-linecap="round" stroke-linejoin="round"><path stroke-width="2.6" d="M6 9.5 L12 15.5 L18 9.5"/></svg>
<div class="b" style="left:2584px;top:1328px;width:56px;height:32px;border-radius:16px;background:#7469b3;box-shadow:0 2px 4px rgba(0,0,0,0.10)"></div>
<div class="b" style="left:2612px;top:1332px;width:24px;height:24px;border-radius:50%;background:#fff"></div>
<div class="t" style="left:2655.8px;top:1331.6px;font-size:28.08px;line-height:28.08px;font-weight:400;color:#121217;letter-spacing:-0.59px;">Display</div>
<div class="b" style="left:594px;top:1398px;width:2651px;height:2px;background:#c6c6d1"></div>
<div class="t" style="left:609.6px;top:1421.2px;font-size:27.3px;line-height:27.3px;font-weight:700;color:#121217;letter-spacing:-0.704px;">Target not changed</div>
<div class="t" style="left:609.6px;top:1455.5px;font-size:26.94px;line-height:26.94px;font-weight:400;color:#78768e;letter-spacing:-0.453px;">No change in file compared to Grid - target status is out-of-date</div>
<div class="b" style="left:1982px;top:1416px;width:567px;height:72px;border:2px solid #c6c6d1;border-radius:6px;box-sizing:border-box;background:#fff"></div>
<div class="t" style="left:2000px;top:1437.3px;font-size:28.29px;line-height:28.29px;font-weight:400;color:#121217;letter-spacing:-0.705px;">Skip</div>
<svg class="b" style="left:2504px;top:1439.5px;color:#121217" width="24" height="24" viewBox="0 0 24 24" fill="none" stroke="currentColor" stroke-linecap="round" stroke-linejoin="round"><path stroke-width="2.6" d="M6 9.5 L12 15.5 L18 9.5"/></svg>
<div class="b" style="left:2584px;top:1434px;width:56px;height:32px;border-radius:16px;background:#7469b3;box-shadow:0 2px 4px rgba(0,0,0,0.10)"></div>
<div class="b" style="left:2612px;top:1438px;width:24px;height:24px;border-radius:50%;background:#fff"></div>
<div class="t" style="left:2655.8px;top:1437.6px;font-size:28.08px;line-height:28.08px;font-weight:400;color:#121217;letter-spacing:-0.59px;">Display</div>
<div class="b" style="left:594px;top:1504px;width:2651px;height:2px;background:#c6c6d1"></div>
<div class="t" style="left:609.6px;top:1527.2px;font-size:27.3px;line-height:27.3px;font-weight:700;color:#121217;letter-spacing:-0.75px;">Record missing</div>
<div class="t" style="left:609.6px;top:1561.5px;font-size:26.94px;line-height:26.94px;font-weight:400;color:#78768e;letter-spacing:-0.468px;">Missing records from file</div>
<div class="b" style="left:1982px;top:1522px;width:567px;height:72px;border:2px solid #c6c6d1;border-radius:6px;box-sizing:border-box;background:#e3e2e8"></div>
<div class="t" style="left:2000px;top:1543.3px;font-size:28.29px;line-height:28.29px;font-weight:400;color:#a9a8ba;letter-spacing:-0.705px;">Skip</div>
<svg class="b" style="left:2504px;top:1545.5px;color:#a9a8ba" width="24" height="24" viewBox="0 0 24 24" fill="none" stroke="currentColor" stroke-linecap="round" stroke-linejoin="round"><path stroke-width="2.2" d="M6 9.5 L12 15.5 L18 9.5"/></svg>
<div class="b" style="left:2584px;top:1540px;width:56px;height:32px;border-radius:16px;background:#7469b3;box-shadow:0 2px 4px rgba(0,0,0,0.10)"></div>
<div class="b" style="left:2612px;top:1544px;width:24px;height:24px;border-radius:50%;background:#fff"></div>
<div class="t" style="left:2655.8px;top:1543.6px;font-size:28.08px;line-height:28.08px;font-weight:400;color:#121217;letter-spacing:-0.59px;">Display</div>
<div class="b" style="left:594px;top:1610px;width:2651px;height:2px;background:#c6c6d1"></div>
<div class="t" style="left:609.6px;top:1633.2px;font-size:27.3px;line-height:27.3px;font-weight:700;color:#121217;letter-spacing:-0.708px;">Source not ready</div>
<div class="t" style="left:609.6px;top:1667.5px;font-size:26.94px;line-height:26.94px;font-weight:400;color:#78768e;letter-spacing:-0.456px;">Source is not ready for translation</div>
<div class="b" style="left:1982px;top:1628px;width:567px;height:72px;border:2px solid #c6c6d1;border-radius:6px;box-sizing:border-box;background:#e3e2e8"></div>
<div class="t" style="left:2000px;top:1649.3px;font-size:28.29px;line-height:28.29px;font-weight:400;color:#a9a8ba;letter-spacing:-0.705px;">Skip</div>
<svg class="b" style="left:2504px;top:1651.5px;color:#a9a8ba" width="24" height="24" viewBox="0 0 24 24" fill="none" stroke="currentColor" stroke-linecap="round" stroke-linejoin="round"><path stroke-width="2.2" d="M6 9.5 L12 15.5 L18 9.5"/></svg>
<div class="b" style="left:2584px;top:1646px;width:56px;height:32px;border-radius:16px;background:#7469b3;box-shadow:0 2px 4px rgba(0,0,0,0.10)"></div>
<div class="b" style="left:2612px;top:1650px;width:24px;height:24px;border-radius:50%;background:#fff"></div>
<div class="t" style="left:2655.8px;top:1649.6px;font-size:28.08px;line-height:28.08px;font-weight:400;color:#121217;letter-spacing:-0.59px;">Display</div>
<div class="b" style="left:3220px;top:1960px;width:100px;height:100px;border-radius:50%;background:#7669b3;box-shadow:0 6px 16px rgba(0,0,0,0.18)"></div>
<svg class="b" style="left:3220px;top:1960px;" width="100" height="100" viewBox="0 0 100 100" fill="none" stroke="currentColor" stroke-linecap="round" stroke-linejoin="round"><g transform="skewX(-11)"><rect x="50.7" y="40" width="32.9" height="34.9" rx="7" fill="#fff" stroke="none"/><rect x="34.2" y="22.7" width="37.3" height="39.6" rx="8.3" fill="#fff" stroke="#7669b3" stroke-width="4.6"/><text x="53.3" y="54.5" fill="#7669b3" stroke="#7669b3" stroke-width="0.8" font-family="Liberation Sans" font-weight="700" font-size="34" text-anchor="middle">?</text></g></svg>
<div class="b" style="left:3281px;top:1951px;width:48px;height:48px;border-radius:50%;background:#dd4f4a"></div>
<svg class="b" style="left:3281px;top:1951px;" width="48" height="48" viewBox="0 0 48 48" fill="none" stroke="currentColor" stroke-linecap="round" stroke-linejoin="round"><path stroke="#fff" stroke-width="4.8" stroke-linecap="butt" d="M26.3 14 V34.2"/><path stroke="#fff" stroke-width="4" stroke-linecap="butt" stroke-linejoin="miter" d="M18.5 20.5 L26.5 15.5"/></svg>
<div class="b" style="left:2924px;top:236px;width:389px;height:161px;border:10.5px solid #e8402a;border-radius:38px;box-sizing:border-box"></div>
<svg class="b" style="left:2540px;top:330px;" width="350" height="100" viewBox="0 0 350 100" fill="none" stroke="currentColor" stroke-linecap="round" stroke-linejoin="round"><path stroke="#e8402a" stroke-width="9.6" stroke-linecap="butt" d="M19.8 88.5 L300 34"/><path fill="#e8402a" stroke="#e8402a" stroke-width="1" stroke-linejoin="miter" d="M281 12.4 L334.6 26.9 L291 60.3 Z"/></svg>
</body></html>
